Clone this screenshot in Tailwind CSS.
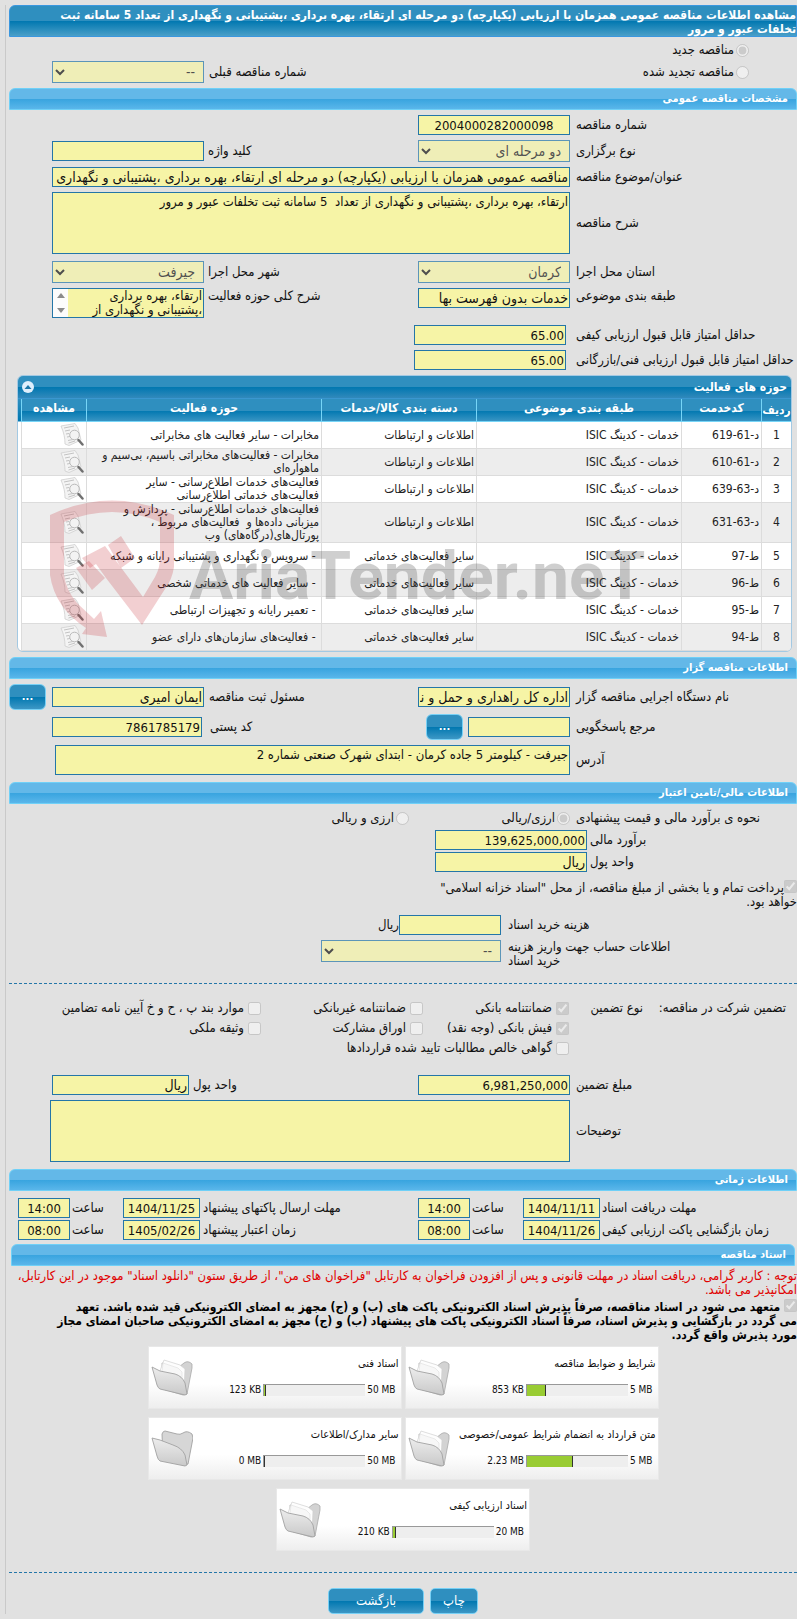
<!DOCTYPE html>
<html lang="fa" dir="rtl">
<head>
  <meta charset="UTF-8">
  <meta name="viewport" content="width=device-width, initial-scale=1.0">
  <title>مشاهده اطلاعات مناقصه عمومی</title>
  <script src="https://cdn.jsdelivr.net/npm/@tailwindcss/browser@4"></script>
</head>
<body class="bg-[#e1e1e1] text-[#111] text-[13px] leading-[14px] font-['DejaVu_Sans_Condensed','DejaVu_Sans',sans-serif] overflow-x-hidden">

<!-- Shared icons -->
<svg class="absolute size-0" xmlns="http://www.w3.org/2000/svg" aria-hidden="true">
  <defs>
    <linearGradient id="folderFill" x1="0" y1="0" x2="0" y2="1">
      <stop offset="0" stop-color="#ededed" />
      <stop offset="1" stop-color="#c9c9c9" />
    </linearGradient>
  </defs>
  <symbol id="icon-view" viewBox="0 0 24 24">
    <path d="M1 3L15 0.500L18 5L21 17L9 22.500L5 21C5 15 4 10 1 3Z" fill="#f4f4f4" stroke="#cfcfcf" stroke-width="0.800" />
    <path d="M4 5L14 3M5 8L10 7M6 11L9 10.500M7 14L10 13.500M8 17.500L13 16.500M8.500 20L15 18" stroke="#bdbdbd" stroke-width="0.900" fill="none" />
    <circle cx="14.500" cy="12" r="4.800" fill="#f3f3f3" fill-opacity="0.800" stroke="#bababa" stroke-width="1" />
    <path d="M18.500 17L22.500 21.500" stroke="#707070" stroke-width="2.500" stroke-linecap="round" />
  </symbol>
  <symbol id="icon-folder-full" viewBox="0 0 42 38">
    <path d="M11 4L28 8L33 4Q37 1 41 5L41 9L36 35L32 36L12 30Z" fill="#d3d3d3" stroke="#aaa" stroke-width="0.800" />
    <path d="M13 1L29 6L34 10L33 32L9 12Z" fill="#fdfdfd" stroke="#d0d0d0" stroke-width="0.700" />
    <path d="M12 4L27 9L31 13L31 24L11 13Z" fill="#f7f7f7" stroke="#dedede" stroke-width="0.600" />
    <path d="M1 8L9 12L24 15Q31 17 34 24L36 35L34 36L9 30Q7 29 6 26Z" fill="url(#folderFill)" stroke="#a2a2a2" stroke-width="0.900" />
  </symbol>
  <symbol id="icon-folder-empty" viewBox="0 0 42 38">
    <path d="M11 4Q12 1 14 1L26 4Q29 5 32 3Q36 0 41 4L42 8L37 34L33 35L12 29Z" fill="#d6d6d6" stroke="#a2a2a2" stroke-width="0.900" />
    <path d="M1 8L9 10L22 15Q31 18 34 25L36 35L34 36L9 31Q7 30 6 26Z" fill="url(#folderFill)" stroke="#a2a2a2" stroke-width="0.900" />
  </symbol>
</svg>

<main class="mr-0 ml-[5px] mt-[5px] border-l border-[#c9c9c9] pl-[3px]">
  <h1 class="h-8 pt-[2px] rounded-tl-md border border-[#3a97df] bg-[linear-gradient(#2f8fbf_0,#2f8fbf_50%,#0077b0_50%,#4a9fc8_100%)] text-white text-[12px] leading-[14px] font-bold">
    مشاهده اطلاعات مناقصه عمومی همزمان با ارزیابی (یکپارچه) دو مرحله ای ارتقاء، بهره برداری ،پشتیبانی و نگهداری از تعداد 5 سامانه ثبت<br>تخلفات عبور و مرور
  </h1>

  <!-- Tender kind -->
  <div class="h-[51px] pt-[2px]">
    <div class="h-[22px] flex items-center pr-12">
      <input type="radio" id="kindNew" name="kind" class="ml-[2px]" checked disabled>
      <label for="kindNew">مناقصه جدید</label>
    </div>
    <div class="grid grid-cols-[1fr_152px_214px_152px_43px] items-center">
      <div class="flex items-center pr-12">
        <input type="radio" id="kindRenewed" name="kind" class="ml-[2px]" disabled>
        <label for="kindRenewed">مناقصه تجدید شده</label>
      </div>
      <span></span>
      <label for="prevNumber" class="text-left pl-[5px]">شماره مناقصه قبلی</label>
      <select id="prevNumber" class="h-[22px] px-1 border border-[#2476a8] bg-[#f6f4a6] text-[14px] opacity-70" disabled><option>--</option></select>
    </div>
  </div>

  <!-- General specification -->
  <h2 class="h-[22px] pr-2 flex items-center rounded-t-md border border-[#6fd0f7] bg-[linear-gradient(#63b8e8_0,#63b8e8_50%,#38a4df_50%,#5ab6ea_100%)] text-white text-[11px] font-bold">مشخصات مناقصه عمومی</h2>
  <div class="pt-[5px] space-y-[5px]">
    <div class="grid grid-cols-[1fr_152px_214px_152px_43px] items-center">
      <label for="tenderNumber" class="text-left pl-[6px]">شماره مناقصه</label>
      <input type="text" id="tenderNumber" value="2004000282000098" class="h-5 px-px border border-[#2476a8] bg-[#f6f4a6] text-[13px] text-center" readonly>
    </div>
    <div class="grid grid-cols-[1fr_152px_214px_152px_43px] items-center">
      <label for="holdingType" class="text-left pl-[6px]">نوع برگزاری</label>
      <select id="holdingType" class="h-[22px] px-1 border border-[#2476a8] bg-[#f6f4a6] text-[14px] opacity-70" disabled><option>دو مرحله ای</option></select>
      <label for="keyword" class="text-left pl-1">کلید واژه</label>
      <input type="text" id="keyword" class="h-5 px-px border border-[#2476a8] bg-[#f6f4a6] text-[14px]" readonly>
    </div>
    <div class="grid grid-cols-[1fr_152px_214px_152px_43px] items-center">
      <label for="subject" class="text-left pl-[6px]">عنوان/موضوع مناقصه</label>
      <input type="text" id="subject" value="مناقصه عمومی همزمان با ارزیابی (یکپارچه) دو مرحله ای ارتقاء، بهره برداری ،پشتیبانی و نگهداری از تعداد 5 سامانه ثبت تخلفات عبور و مرور" class="col-span-3 h-5 px-px border border-[#2476a8] bg-[#f6f4a6] text-[14px]" readonly>
    </div>
    <div class="grid grid-cols-[1fr_152px_214px_152px_43px] items-center">
      <label for="description" class="text-left pl-[6px]">شرح مناقصه</label>
      <textarea id="description" class="col-span-3 block h-[62px] px-px py-[2px] border border-[#2476a8] bg-[#f6f4a6] resize-none" readonly>ارتقاء، بهره برداری ،پشتیبانی و نگهداری از تعداد  5 سامانه ثبت تخلفات عبور و مرور</textarea>
    </div>
    <div class="grid grid-cols-[1fr_152px_214px_152px_43px] items-center pt-[2px]">
      <label for="province" class="text-left pl-[6px]">استان محل اجرا</label>
      <select id="province" class="h-[22px] px-1 border border-[#2476a8] bg-[#f6f4a6] text-[14px] opacity-70" disabled><option>کرمان</option></select>
      <label for="city" class="text-left pl-1">شهر محل اجرا</label>
      <select id="city" class="h-[22px] px-1 border border-[#2476a8] bg-[#f6f4a6] text-[14px] opacity-70" disabled><option>جیرفت</option></select>
    </div>
    <div class="grid grid-cols-[1fr_152px_214px_152px_43px] items-start">
      <label for="subjectClass" class="text-left pl-[6px] pt-px">طبقه بندی موضوعی</label>
      <input type="text" id="subjectClass" value="خدمات بدون فهرست بها" class="h-5 px-px border border-[#2476a8] bg-[#f6f4a6] text-[14px]" readonly>
      <label for="activityDesc" class="text-left pl-1 pt-px">شرح کلی حوزه فعالیت</label>
      <div class="h-[30px] flex border border-[#2476a8] bg-[#f6f4a6]">
        <textarea id="activityDesc" class="flex-1 min-w-0 h-7 px-px py-0 resize-none overflow-hidden" readonly>ارتقاء، بهره برداری ،پشتیبانی و نگهداری از تعداد  5 سامانه ثبت تخلفات عبور و مرور</textarea>
        <div class="w-[15px] flex flex-col items-center justify-between py-1 bg-[#fcfcfc]">
          <svg class="w-2 h-[5px]" viewBox="0 0 8 5"><path d="M4 0L8 5H0Z" fill="#8b8b8b" /></svg>
          <svg class="w-2 h-[5px]" viewBox="0 0 8 5"><path d="M4 5L8 0H0Z" fill="#8b8b8b" /></svg>
        </div>
      </div>
    </div>
    <div class="grid grid-cols-[1fr_152px_409px] items-center pt-[2px]">
      <label for="minQuality" class="text-left pl-[6px]">حداقل امتیاز قابل قبول ارزیابی کیفی</label>
      <input type="text" id="minQuality" value="65.00" class="w-[152px] mr-1 h-5 px-px border border-[#2476a8] bg-[#f6f4a6] text-[13px]" readonly>
    </div>
    <div class="grid grid-cols-[1fr_152px_409px] items-center">
      <label for="minTechnical" class="text-left pl-[6px] whitespace-nowrap">حداقل امتیاز قابل قبول ارزیابی فنی/بازرگانی</label>
      <input type="text" id="minTechnical" value="65.00" class="w-[152px] mr-1 h-5 px-px border border-[#2476a8] bg-[#f6f4a6] text-[13px]" readonly>
    </div>
  </div>

  <!-- Activity fields -->
  <section class="relative mt-[5px] mr-[5px] ml-2">
    <div class="border border-[#a3c9e3] rounded-md overflow-hidden">
      <div class="h-[23px] px-1 flex items-center justify-between border-b border-[#3a97d0] bg-[linear-gradient(#2f8fbf_0,#2f8fbf_50%,#0077b0_50%,#3189bb_100%)] text-white">
        <h3 class="text-xs font-bold">حوزه های فعالیت</h3>
        <button type="button" aria-label="بستن" class="size-3 rounded-full bg-[#dfeffc] flex items-center justify-center">
          <svg class="w-2 h-1" viewBox="0 0 8 4"><path d="M4 0L7.500 4H0.500Z" fill="#1b76a8" /></svg>
        </button>
      </div>
      <div class="pl-[3px] bg-[linear-gradient(#2f8fbf_0,#0077b0_22px,#fff_23px)]">
        <table class="w-full table-fixed border-separate border-spacing-0 text-[12px] leading-[13px] text-[#222]">
          <colgroup>
            <col class="w-[30px]"><col class="w-20"><col><col class="w-[155px]"><col class="w-[235px]"><col class="w-[65px]">
          </colgroup>
          <thead class="text-white">
            <tr class="h-[23px] bg-[linear-gradient(#2f8fbf_0,#2f8fbf_50%,#0077b0_50%,#3d97c5_100%)]">
              <th class="p-0 font-bold border-b border-l border-[#77d5f7] whitespace-nowrap overflow-hidden">ردیف</th>
              <th class="p-0 pb-1 font-bold border-b border-l border-[#77d5f7]">کدخدمت</th>
              <th class="p-0 pb-1 font-bold border-b border-l border-[#77d5f7]">طبقه بندی موضوعی</th>
              <th class="p-0 pb-1 font-bold border-b border-l border-[#77d5f7]">دسته بندی کالا/خدمات</th>
              <th class="p-0 pb-1 font-bold border-b border-l border-[#77d5f7]">حوزه فعالیت</th>
              <th class="p-0 pb-1 font-bold border-b border-l border-[#77d5f7]">مشاهده</th>
            </tr>
          </thead>
          <tbody class="[&_td]:border-b [&_td]:border-l [&_td]:border-[#dcdcdc] [&_td]:py-0 [&_td]:px-[2px] [&_td:first-child]:text-center">
            <tr class="h-[27px] bg-white">
              <td>1</td><td>د-61-619</td><td>خدمات - کدینگ ISIC</td><td>اطلاعات و ارتباطات</td><td>مخابرات - سایر فعالیت های مخابراتی</td>
              <td><button type="button" aria-label="مشاهده" class="block"><svg class="size-6"><use href="#icon-view" /></svg></button></td>
            </tr>
            <tr class="h-[27px] bg-[#ededed]">
              <td>2</td><td>د-61-610</td><td>خدمات - کدینگ ISIC</td><td>اطلاعات و ارتباطات</td><td>مخابرات - فعالیت‌های مخابراتی باسیم، بی‌سیم و<br>ماهواره‌ای</td>
              <td><button type="button" aria-label="مشاهده" class="block"><svg class="size-6"><use href="#icon-view" /></svg></button></td>
            </tr>
            <tr class="h-[27px] bg-white">
              <td>3</td><td>د-63-639</td><td>خدمات - کدینگ ISIC</td><td>اطلاعات و ارتباطات</td><td>فعالیت‌های خدمات اطلاع‌رسانی - سایر<br>فعالیت‌های خدماتی اطلاع‌رسانی</td>
              <td><button type="button" aria-label="مشاهده" class="block"><svg class="size-6"><use href="#icon-view" /></svg></button></td>
            </tr>
            <tr class="h-10 bg-[#ededed]">
              <td>4</td><td>د-63-631</td><td>خدمات - کدینگ ISIC</td><td>اطلاعات و ارتباطات</td><td>فعالیت‌های خدمات اطلاع‌رسانی - پردازش و<br>میزبانی داده‌ها و &nbsp;فعالیت‌های مربوط ،<br>پورتال‌های(درگاه‌های) وب</td>
              <td><button type="button" aria-label="مشاهده" class="block"><svg class="size-6"><use href="#icon-view" /></svg></button></td>
            </tr>
            <tr class="h-[27px] bg-white">
              <td>5</td><td>ط-97</td><td>خدمات - کدینگ ISIC</td><td>سایر فعالیت‌های خدماتی</td><td>&nbsp;- سرویس و نگهداری و پشتیبانی رایانه و شبکه</td>
              <td><button type="button" aria-label="مشاهده" class="block"><svg class="size-6"><use href="#icon-view" /></svg></button></td>
            </tr>
            <tr class="h-[27px] bg-[#ededed]">
              <td>6</td><td>ط-96</td><td>خدمات - کدینگ ISIC</td><td>سایر فعالیت‌های خدماتی</td><td>&nbsp;- سایر فعالیت های خدماتی شخصی</td>
              <td><button type="button" aria-label="مشاهده" class="block"><svg class="size-6"><use href="#icon-view" /></svg></button></td>
            </tr>
            <tr class="h-[27px] bg-white">
              <td>7</td><td>ط-95</td><td>خدمات - کدینگ ISIC</td><td>سایر فعالیت‌های خدماتی</td><td>&nbsp;- تعمیر رایانه و تجهیزات ارتباطی</td>
              <td><button type="button" aria-label="مشاهده" class="block"><svg class="size-6"><use href="#icon-view" /></svg></button></td>
            </tr>
            <tr class="h-[27px] bg-[#ededed]">
              <td>8</td><td>ط-94</td><td>خدمات - کدینگ ISIC</td><td>سایر فعالیت‌های خدماتی</td><td>&nbsp;- فعالیت‌های سازمان‌های دارای عضو</td>
              <td><button type="button" aria-label="مشاهده" class="block"><svg class="size-6"><use href="#icon-view" /></svg></button></td>
            </tr>
          </tbody>
        </table>
      </div>
    </div>

    <!-- Watermark -->
    <svg class="absolute left-[33px] top-[123px] w-[620px] h-[140px] pointer-events-none" viewBox="0 0 620 140" direction="ltr">
      <g fill="#c2262e" fill-opacity="0.220">
        <path d="M0 17Q62-12 124 17L124 69Q122 82 115 91L92 127L56 80L46 66L40 70L32 60L55 48L93 99L105 79Q110 70 110 60L110 24Q62 4 14 24L14 77Q16 92 27 105L44 121L51 113L57 139L32 136L36 130Q5 110 0 77Z" />
        <path d="M26 70L39 63L55 80L42 92Z" />
        <path d="M58 47L71 38L85 60L71 70Z" />
      </g>
      <text x="139" y="101" direction="ltr" text-anchor="start" fill="#4c4c4c" fill-opacity="0.270" font-family="Roboto,'Liberation Sans',sans-serif" font-weight="bold" font-size="66">AriaTender.neT</text>
    </svg>
  </section>

  <!-- Tender owner -->
  <h2 class="mt-[5px] h-[22px] pr-2 flex items-center rounded-t-md border border-[#6fd0f7] bg-[linear-gradient(#63b8e8_0,#63b8e8_50%,#38a4df_50%,#5ab6ea_100%)] text-white text-[11px] font-bold">اطلاعات مناقصه گزار</h2>
  <div class="pt-[5px]">
    <div class="h-[26px] grid grid-cols-[1fr_152px_214px_152px_43px] items-center">
      <label for="agency" class="text-left pl-[6px]">نام دستگاه اجرایی مناقصه گزار</label>
      <input type="text" id="agency" value="اداره کل راهداری و حمل و نقل جاده ای استان کرمان" class="h-5 px-px border border-[#2476a8] bg-[#f6f4a6] text-[14px]" readonly>
      <label for="registrar" class="text-left pl-[5px]">مسئول ثبت مناقصه</label>
      <input type="text" id="registrar" value="ایمان امیری" class="h-5 px-px border border-[#2476a8] bg-[#f6f4a6] text-[14px]" readonly>
      <button type="button" class="w-[37px] h-[26px] mr-auto rounded-md border border-[#77d0f5] bg-[linear-gradient(#2f8fbf_0,#2f8fbf_50%,#0077b0_50%,#3d97c5_100%)] text-white text-[11px] font-bold">...</button>
    </div>
    <div class="mt-1 h-[26px] grid grid-cols-[1fr_152px_214px_152px_43px] items-center">
      <label for="responder" class="text-left pl-[6px]">مرجع پاسخگویی</label>
      <div class="flex gap-[5px] items-center">
        <input type="text" id="responder" class="w-[102px] shrink-0 h-5 px-px border border-[#2476a8] bg-[#f6f4a6] text-[14px]" readonly>
        <button type="button" class="w-[37px] h-[26px] rounded-md border border-[#77d0f5] bg-[linear-gradient(#2f8fbf_0,#2f8fbf_50%,#0077b0_50%,#3d97c5_100%)] text-white text-[11px] font-bold">...</button>
      </div>
      <label for="postal" class="text-left pl-[6px]">کد پستی</label>
      <input type="text" id="postal" value="7861785179" class="w-[150px] mr-[2px] h-5 px-px border border-[#2476a8] bg-[#f6f4a6] text-[13px]" readonly>
    </div>
    <div class="mt-[5px] grid grid-cols-[1fr_515px_46px] items-center">
      <label for="address" class="text-left pl-[6px]">آدرس</label>
      <textarea id="address" class="block h-[30px] px-px py-[2px] border border-[#2476a8] bg-[#f6f4a6] resize-none overflow-hidden" readonly>جیرفت - کیلومتر 5 جاده کرمان - ابتدای شهرک صنعتی شماره 2</textarea>
    </div>
  </div>

  <!-- Finance -->
  <h2 class="mt-[7px] h-[22px] pr-2 flex items-center rounded-t-md border border-[#6fd0f7] bg-[linear-gradient(#63b8e8_0,#63b8e8_50%,#38a4df_50%,#5ab6ea_100%)] text-white text-[11px] font-bold">اطلاعات مالی/تامین اعتبار</h2>
  <div class="pt-[2px]">
    <div class="h-6 grid grid-cols-[1fr_161px_400px] items-center">
      <span class="text-left pl-[6px]">نحوه ی برآورد مالی و قیمت پیشنهادی</span>
      <div class="flex items-center">
        <input type="radio" id="currencyOr" name="currency" class="ml-[2px]" checked disabled>
        <label for="currencyOr">ارزی/ریالی</label>
      </div>
      <div class="flex items-center">
        <input type="radio" id="currencyBoth" name="currency" class="ml-[2px]" disabled>
        <label for="currencyBoth">ارزی و ریالی</label>
      </div>
    </div>
    <div class="grid grid-cols-[1fr_152px_426px] items-center">
      <label for="estimate" class="text-left pl-[3px]">برآورد مالی</label>
      <input type="text" id="estimate" value="139,625,000,000" class="h-5 px-px border border-[#2476a8] bg-[#f6f4a6] text-[13px]" readonly>
    </div>
    <div class="mt-[2px] grid grid-cols-[1fr_152px_426px] items-center">
      <label for="unit" class="text-left pl-[3px]">واحد پول</label>
      <input type="text" id="unit" value="ریال" class="h-5 px-px border border-[#2476a8] bg-[#f6f4a6] text-[14px]" readonly>
    </div>
    <div class="mt-[8px] h-[30px] w-[374px] whitespace-nowrap">
      <input type="checkbox" id="treasury" class="align-[-1px]" checked disabled><label for="treasury">پرداخت تمام و یا بخشی از مبلغ مناقصه، از محل "اسناد خزانه اسلامی"<br>خواهد بود.</label>
    </div>
    <div class="mt-[5px] grid grid-cols-[1fr_102px_390px] items-center">
      <label for="docCost" class="text-left pl-[7px]">هزینه خرید اسناد</label>
      <input type="text" id="docCost" class="h-5 px-px border border-[#2476a8] bg-[#f6f4a6] text-[14px]" readonly>
      <span>ریال</span>
    </div>
    <div class="mt-[5px] h-[28px] grid grid-cols-[1fr_180px_312px] items-start">
      <label for="account" class="text-left pl-[7px] whitespace-nowrap">اطلاعات حساب جهت واریز هزینه<br>خرید اسناد</label>
      <select id="account" class="h-[22px] px-1 border border-[#2476a8] bg-[#f6f4a6] text-[14px] opacity-70" disabled><option>--</option></select>
    </div>
  </div>

  <hr class="mt-[15px] border-t border-dashed border-[#2476a8]">

  <!-- Guarantee -->
  <div class="pt-[14px]">
    <div class="h-5 grid grid-cols-[1fr_89px_146px_162px_252px] items-center whitespace-nowrap">
      <span class="pr-[11px]">تضمین شرکت در مناقصه:</span>
      <span class="pr-[15px]">نوع تضمین</span>
      <div class="flex items-center gap-1"><input type="checkbox" id="g1" checked disabled><label for="g1">ضمانتنامه بانکی</label></div>
      <div class="flex items-center gap-1"><input type="checkbox" id="g2" disabled><label for="g2">ضمانتنامه غیربانکی</label></div>
      <div class="flex items-center gap-1"><input type="checkbox" id="g3" disabled><label for="g3">موارد بند پ ، ح و خ آیین نامه تضامین</label></div>
    </div>
    <div class="h-5 grid grid-cols-[1fr_89px_146px_162px_252px] items-center whitespace-nowrap">
      <span></span>
      <span></span>
      <div class="flex items-center gap-1"><input type="checkbox" id="g4" checked disabled><label for="g4">فیش بانکی (وجه نقد)</label></div>
      <div class="flex items-center gap-1"><input type="checkbox" id="g5" disabled><label for="g5">اوراق مشارکت</label></div>
      <div class="flex items-center gap-1"><input type="checkbox" id="g6" disabled><label for="g6">وثیقه ملکی</label></div>
    </div>
    <div class="h-5 grid grid-cols-[1fr_89px_560px] items-center">
      <span></span>
      <span></span>
      <div class="flex items-center gap-1"><input type="checkbox" id="g7" disabled><label for="g7">گواهی خالص مطالبات تایید شده قراردادها</label></div>
    </div>
    <div class="mt-[17px] grid grid-cols-[1fr_152px_229px_137px_43px] items-center">
      <label for="guarantee" class="text-left pl-[6px]">مبلغ تضمین</label>
      <input type="text" id="guarantee" value="6,981,250,000" class="h-5 px-px border border-[#2476a8] bg-[#f6f4a6] text-[13px]" readonly>
      <label for="guaranteeUnit" class="text-left pl-1">واحد پول</label>
      <input type="text" id="guaranteeUnit" value="ریال" class="h-5 px-px border border-[#2476a8] bg-[#f6f4a6] text-[14px]" readonly>
    </div>
    <div class="mt-[5px] grid grid-cols-[1fr_520px_41px] items-center">
      <label for="notes" class="text-left pl-[6px]">توضیحات</label>
      <textarea id="notes" class="block h-[62px] px-px py-[2px] border border-[#2476a8] bg-[#f6f4a6] resize-none" readonly></textarea>
    </div>
  </div>

  <!-- Schedule -->
  <h2 class="mt-[7px] h-[22px] pr-2 flex items-center rounded-t-md border border-[#6fd0f7] bg-[linear-gradient(#63b8e8_0,#63b8e8_50%,#38a4df_50%,#5ab6ea_100%)] text-white text-[11px] font-bold">اطلاعات زمانی</h2>
  <div class="pt-[7px] space-y-[2px]">
    <div class="grid grid-cols-[1fr_77px_53px_52px_218px_77px_53px_52px_9px] items-center">
      <label for="docDate" class="text-left pl-[2px]">مهلت دریافت اسناد</label>
      <input type="text" id="docDate" value="1404/11/11" class="h-5 border border-[#2476a8] bg-[#f6f4a6] text-[13px] text-center" readonly>
      <label for="docTime" class="text-left pl-[2px]">ساعت</label>
      <input type="text" id="docTime" value="14:00" class="h-5 border border-[#2476a8] bg-[#f6f4a6] text-[13px] text-center" readonly>
      <label for="sendDate" class="text-left pl-[3px]">مهلت ارسال پاکتهای پیشنهاد</label>
      <input type="text" id="sendDate" value="1404/11/25" class="h-5 border border-[#2476a8] bg-[#f6f4a6] text-[13px] text-center" readonly>
      <label for="sendTime" class="text-left pl-[2px]">ساعت</label>
      <input type="text" id="sendTime" value="14:00" class="h-5 border border-[#2476a8] bg-[#f6f4a6] text-[13px] text-center" readonly>
    </div>
    <div class="grid grid-cols-[1fr_77px_53px_52px_218px_77px_53px_52px_9px] items-center">
      <label for="openDate" class="text-left pl-[2px]">زمان بازگشایی پاکت ارزیابی کیفی</label>
      <input type="text" id="openDate" value="1404/11/26" class="h-5 border border-[#2476a8] bg-[#f6f4a6] text-[13px] text-center" readonly>
      <label for="openTime" class="text-left pl-[2px]">ساعت</label>
      <input type="text" id="openTime" value="08:00" class="h-5 border border-[#2476a8] bg-[#f6f4a6] text-[13px] text-center" readonly>
      <label for="validDate" class="text-left pl-[3px]">زمان اعتبار پیشنهاد</label>
      <input type="text" id="validDate" value="1405/02/26" class="h-5 border border-[#2476a8] bg-[#f6f4a6] text-[13px] text-center" readonly>
      <label for="validTime" class="text-left pl-[2px]">ساعت</label>
      <input type="text" id="validTime" value="08:00" class="h-5 border border-[#2476a8] bg-[#f6f4a6] text-[13px] text-center" readonly>
    </div>
  </div>

  <!-- Documents -->
  <h2 class="mt-1 mx-[2px] h-[22px] pr-2 flex items-center rounded-t-md border border-[#6fd0f7] bg-[linear-gradient(#63b8e8_0,#63b8e8_50%,#38a4df_50%,#5ab6ea_100%)] text-white text-[11px] font-bold">اسناد مناقصه</h2>
  <p class="pt-[3px] text-[#e00000]">توجه : کاربر گرامی، دریافت اسناد در مهلت قانونی و پس از افزودن فراخوان به کارتابل "فراخوان های من"، از طریق ستون "دانلود اسناد" موجود در این کارتابل،<br>امکانپذیر می باشد.</p>
  <p class="pt-[2px] font-bold text-[12px] leading-[14px] text-black">
    <input type="checkbox" id="commit" class="align-[-1px]" checked disabled>
    <label for="commit">متعهد می شود در اسناد مناقصه، صرفاً پذیرش اسناد الکترونیکی پاکت های (ب) و (ج) مجهز به امضای الکترونیکی قید شده باشد. تعهد<br>می گردد در بازگشایی و پذیرش اسناد، صرفاً اسناد الکترونیکی پاکت های پیشنهاد (ب) و (ج) مجهز به امضای الکترونیکی صاحبان امضای مجاز<br>مورد پذیرش واقع گردد.</label>
  </p>

  <div class="mt-1 flex flex-wrap justify-center gap-x-[3px] gap-y-2 px-[130px] text-[10px]">
    <article class="w-[254px] h-[63px] flex bg-[linear-gradient(#fff_60%,#eee)] border border-[#e8e8e8]">
      <div class="flex-1 pr-[2px] pt-[10px]">
        <h3 class="text-[11px]">شرایط و ضوابط مناقصه</h3>
        <div class="mt-3 flex items-center gap-[2px] pr-[3px]">
          <span dir="ltr">5 MB</span>
          <div dir="ltr" class="w-[102px] h-3 border-t border-l border-[#999] bg-[#eee]"><div class="h-full bg-[#9c3] border-r border-[#333]" style="width: 19%"></div></div>
          <span dir="ltr">853 KB</span>
        </div>
      </div>
      <svg class="w-[42px] h-[38px] mt-3 ml-[2px]"><use href="#icon-folder-full" /></svg>
    </article>
    <article class="w-[254px] h-[63px] flex bg-[linear-gradient(#fff_60%,#eee)] border border-[#e8e8e8]">
      <div class="flex-1 pr-[2px] pt-[10px]">
        <h3 class="text-[11px]">اسناد فنی</h3>
        <div class="mt-3 flex items-center gap-[2px] pr-[3px]">
          <span dir="ltr">50 MB</span>
          <div dir="ltr" class="w-[102px] h-3 border-t border-l border-[#999] bg-[#eee]"><div class="h-full bg-[#9c3] border-r border-[#333]" style="width: 2%"></div></div>
          <span dir="ltr">123 KB</span>
        </div>
      </div>
      <svg class="w-[42px] h-[38px] mt-3 ml-[2px]"><use href="#icon-folder-full" /></svg>
    </article>
    <article class="w-[254px] h-[63px] flex bg-[linear-gradient(#fff_60%,#eee)] border border-[#e8e8e8]">
      <div class="flex-1 pr-[2px] pt-[10px]">
        <h3 class="text-[11px]">متن قرارداد به انضمام شرایط عمومی/خصوصی</h3>
        <div class="mt-3 flex items-center gap-[2px] pr-[3px]">
          <span dir="ltr">5 MB</span>
          <div dir="ltr" class="w-[102px] h-3 border-t border-l border-[#999] bg-[#eee]"><div class="h-full bg-[#9c3] border-r border-[#333]" style="width: 46%"></div></div>
          <span dir="ltr">2.23 MB</span>
        </div>
      </div>
      <svg class="w-[42px] h-[38px] mt-3 ml-[2px]"><use href="#icon-folder-full" /></svg>
    </article>
    <article class="w-[254px] h-[63px] flex bg-[linear-gradient(#fff_60%,#eee)] border border-[#e8e8e8]">
      <div class="flex-1 pr-[2px] pt-[10px]">
        <h3 class="text-[11px]">سایر مدارک/اطلاعات</h3>
        <div class="mt-3 flex items-center gap-[2px] pr-[3px]">
          <span dir="ltr">50 MB</span>
          <div dir="ltr" class="w-[102px] h-3 border-t border-l border-[#999] bg-[#eee]"><div class="h-full bg-[#9c3] border-r border-[#333]" style="width: 0%"></div></div>
          <span dir="ltr">0 MB</span>
        </div>
      </div>
      <svg class="w-[42px] h-[38px] mt-3 ml-[2px]"><use href="#icon-folder-empty" /></svg>
    </article>
    <article class="w-[254px] h-[63px] flex bg-[linear-gradient(#fff_60%,#eee)] border border-[#e8e8e8]">
      <div class="flex-1 pr-[2px] pt-[10px]">
        <h3 class="text-[11px]">اسناد ارزیابی کیفی</h3>
        <div class="mt-3 flex items-center gap-[2px] pr-[3px]">
          <span dir="ltr">20 MB</span>
          <div dir="ltr" class="w-[102px] h-3 border-t border-l border-[#999] bg-[#eee]"><div class="h-full bg-[#9c3] border-r border-[#333]" style="width: 3%"></div></div>
          <span dir="ltr">210 KB</span>
        </div>
      </div>
      <svg class="w-[42px] h-[38px] mt-3 ml-[2px]"><use href="#icon-folder-full" /></svg>
    </article>
  </div>

  <hr class="mt-[21px] border-t border-dashed border-[#2476a8]">

  <div class="mt-[15px] mb-[5px] flex justify-center gap-[6px]">
    <button type="button" class="w-12 h-[26px] rounded-[5px] border border-[#77d0f5] bg-[linear-gradient(#2f8fbf_0,#2f8fbf_50%,#0077b0_50%,#3d97c5_100%)] text-white text-[13px]">چاپ</button>
    <button type="button" class="w-24 h-[26px] rounded-[5px] border border-[#77d0f5] bg-[linear-gradient(#2f8fbf_0,#2f8fbf_50%,#0077b0_50%,#3d97c5_100%)] text-white text-[13px]">بازگشت</button>
  </div>
</main>
</body>
</html>
